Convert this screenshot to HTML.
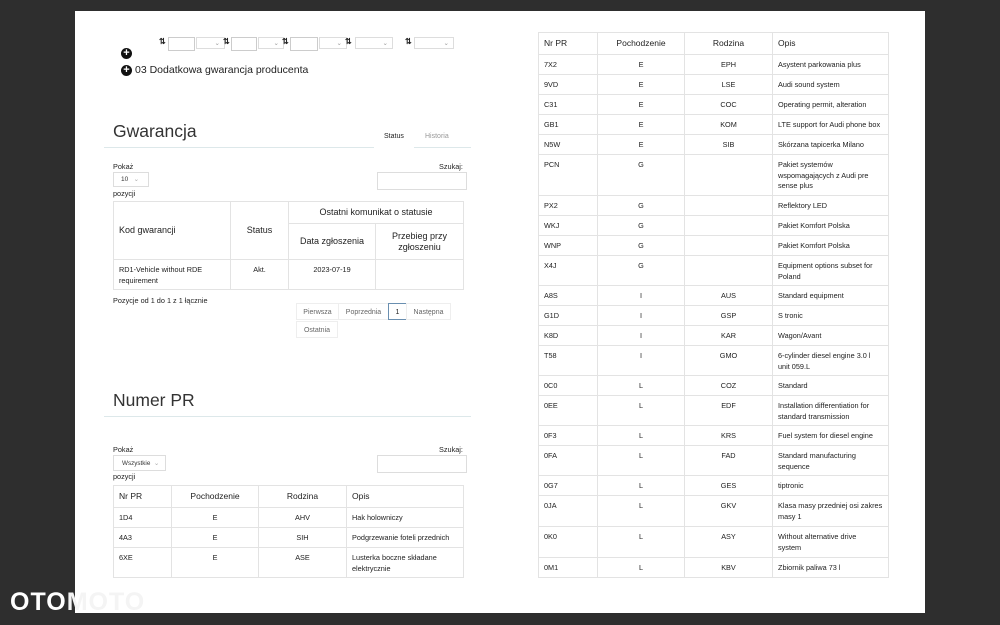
<!DOCTYPE html>
<html><head><meta charset="utf-8"><style>
body{margin:0;width:1000px;height:625px;background:#2e2e2e;position:relative;overflow:hidden;font-family:"Liberation Sans",sans-serif;color:#222}
#pg{position:absolute;left:75px;top:11px;width:850px;height:602px;background:#fff}
.a{position:absolute}
table{border-collapse:collapse;position:absolute;font-size:7.3px;table-layout:fixed}
td,th{border:1px solid #e3e3e3;padding:0 5px;vertical-align:top;font-weight:normal;line-height:10.5px}
.c{text-align:center}
.s{font-size:7.3px}
.box{position:absolute;border:1px solid #ccc;background:#fff;height:12px}
.sel{position:absolute;border:1px solid #ddd;height:12px;font-size:6.5px;color:#999;text-align:right;box-sizing:border-box;padding-right:4px;line-height:11px}
.plus{position:absolute;width:11px;height:11px;border-radius:50%;background:#111;color:#fff;font-size:11px;line-height:11px;text-align:center;font-weight:bold}
.ar{position:absolute;font-size:8px;font-weight:bold}
h2{position:absolute;margin:0;font-weight:normal;font-size:17.5px;color:#333}
.pb{position:absolute;border:1px solid #eee;font-size:7px;color:#666;height:17px;line-height:17px;text-align:center;box-sizing:border-box}
</style></head><body>
<div id="pg"></div>
<div class="ar" style="left:159px;top:37px">⇅</div><div class="box" style="left:168px;top:37px;width:25px"></div><div class="sel" style="left:196px;top:37px;width:29px">⌄</div>
<div class="ar" style="left:223px;top:37px">⇅</div><div class="box" style="left:231px;top:37px;width:24px"></div><div class="sel" style="left:258px;top:37px;width:26px">⌄</div>
<div class="ar" style="left:282px;top:37px">⇅</div><div class="box" style="left:290px;top:37px;width:26px"></div><div class="sel" style="left:319px;top:37px;width:28px">⌄</div>
<div class="ar" style="left:345px;top:37px">⇅</div><div class="sel" style="left:355px;top:37px;width:38px">⌄</div>
<div class="ar" style="left:405px;top:37px">⇅</div><div class="sel" style="left:414px;top:37px;width:40px">⌄</div>
<div class="plus" style="left:121px;top:48px">+</div>
<div class="plus" style="left:121px;top:65px">+</div>
<div class="a" style="left:135px;top:64px;font-size:10.5px">03 Dodatkowa gwarancja producenta</div>
<h2 style="left:113px;top:121px">Gwarancja</h2>
<div class="a" style="left:104px;top:147px;width:270px;border-top:1px solid #dde8ea"></div>
<div class="a" style="left:384px;top:133px;font-size:7px">Status</div>
<div class="a" style="left:425px;top:133px;font-size:7px;color:#999">Historia</div>
<div class="a" style="left:414px;top:147px;width:57px;border-top:1px solid #dde8ea"></div>
<div class="a s" style="left:113px;top:162px">Pokaż</div>
<div class="sel" style="left:113px;top:172px;width:36px;height:15px;color:#333;text-align:left;padding-left:7px;line-height:14px">10 &nbsp; <span style="color:#aaa">⌄</span></div>
<div class="a s" style="left:113px;top:189px">pozycji</div>
<div class="a s" style="left:439px;top:162px">Szukaj:</div>
<div class="box" style="left:377px;top:172px;width:88px;height:16px;border-color:#ddd"></div>
<table style="left:113px;top:201px;width:350px;font-size:9px">
<col style="width:117px"><col style="width:58px"><col style="width:87px"><col style="width:88px">
<tr style="height:22px"><th rowspan="2" style="text-align:left;vertical-align:middle">Kod gwarancji</th><th rowspan="2" class="c" style="vertical-align:middle">Status</th><th colspan="2" class="c" style="vertical-align:middle">Ostatni komunikat o statusie</th></tr>
<tr style="height:36px"><th class="c" style="vertical-align:middle">Data zgłoszenia</th><th class="c" style="vertical-align:middle">Przebieg przy zgłoszeniu</th></tr>
<tr style="height:30px;font-size:7.3px"><td style="padding-top:5px">RD1-Vehicle without RDE requirement</td><td class="c" style="padding-top:5px">Akt.</td><td class="c" style="padding-top:5px">2023-07-19</td><td></td></tr>
</table>
<div class="a s" style="left:113px;top:296px">Pozycje od 1 do 1 z 1 łącznie</div>
<div class="pb" style="left:296px;top:303px;width:43px">Pierwsza</div>
<div class="pb" style="left:338px;top:303px;width:51px">Poprzednia</div>
<div class="pb" style="left:388px;top:303px;width:19px;border-color:#6a8fb0;color:#222">1</div>
<div class="pb" style="left:406px;top:303px;width:45px">Następna</div>
<div class="pb" style="left:296px;top:321px;width:42px">Ostatnia</div>
<h2 style="left:113px;top:390px">Numer PR</h2>
<div class="a" style="left:104px;top:416px;width:367px;border-top:1px solid #dde8ea"></div>
<div class="a s" style="left:113px;top:445px">Pokaż</div>
<div class="sel" style="left:113px;top:455px;width:53px;height:16px;color:#333;text-align:left;padding-left:8px;line-height:15px;font-size:6.3px">Wszystkie &nbsp;<span style="color:#aaa">⌄</span></div>
<div class="a s" style="left:113px;top:472px">pozycji</div>
<div class="a s" style="left:439px;top:445px">Szukaj:</div>
<div class="box" style="left:377px;top:455px;width:88px;height:16px;border-color:#ddd"></div>
<table style="left:113px;top:485px;width:350px">
<col style="width:58px"><col style="width:87px"><col style="width:88px"><col style="width:117px">
<tr style="height:22px;font-size:8.5px"><th style="text-align:left;vertical-align:middle">Nr PR</th><th class="c" style="vertical-align:middle">Pochodzenie</th><th class="c" style="vertical-align:middle">Rodzina</th><th style="text-align:left;vertical-align:middle">Opis</th></tr>
<tr style="height:20px"><td style="padding-top:5px">1D4</td><td class="c" style="padding-top:5px">E</td><td class="c" style="padding-top:5px">AHV</td><td style="padding-top:5px">Hak holowniczy</td></tr>
<tr style="height:20px"><td style="padding-top:5px">4A3</td><td class="c" style="padding-top:5px">E</td><td class="c" style="padding-top:5px">SIH</td><td style="padding-top:5px">Podgrzewanie foteli przednich</td></tr>
<tr style="height:30px"><td style="padding-top:5px">6XE</td><td class="c" style="padding-top:5px">E</td><td class="c" style="padding-top:5px">ASE</td><td style="padding-top:5px">Lusterka boczne składane elektrycznie</td></tr>
</table>
<table id="r" style="left:538px;top:32px;width:350px">
<col style="width:59px"><col style="width:87px"><col style="width:88px"><col style="width:116px">
<tr style="height:22px;font-size:8.5px"><th style="text-align:left;vertical-align:middle">Nr PR</th><th class="c" style="vertical-align:middle">Pochodzenie</th><th class="c" style="vertical-align:middle">Rodzina</th><th style="text-align:left;vertical-align:middle">Opis</th></tr>
</table>
<script>
var d=[["7X2","E","EPH","Asystent parkowania plus",20],["9VD","E","LSE","Audi sound system",20],["C31","E","COC","Operating permit, alteration",20],["GB1","E","KOM","LTE support for Audi phone box",20],["N5W","E","SIB","Skórzana tapicerka Milano",20],["PCN","G","","Pakiet systemów wspomagających z Audi pre sense plus",41],["PX2","G","","Reflektory LED",20],["WKJ","G","","Pakiet Komfort Polska",20],["WNP","G","","Pakiet Komfort Polska",20],["X4J","G","","Equipment options subset for Poland",30],["A8S","I","AUS","Standard equipment",20],["G1D","I","GSP","S tronic",20],["K8D","I","KAR","Wagon/Avant",20],["T58","I","GMO","6-cylinder diesel engine 3.0 l unit 059.L",30],["0C0","L","COZ","Standard",20],["0EE","L","EDF","Installation differentiation for standard transmission",30],["0F3","L","KRS","Fuel system for diesel engine",20],["0FA","L","FAD","Standard manufacturing sequence",30],["0G7","L","GES","tiptronic",20],["0JA","L","GKV","Klasa masy przedniej osi zakres masy 1",31],["0K0","L","ASY","Without alternative drive<br>system",31],["0M1","L","KBV","Zbiornik paliwa 73 l",20]];
var t=document.getElementById("r"),h="";
d.forEach(function(r){h+='<tr style="height:'+r[4]+'px"><td style="padding-top:5px">'+r[0]+'</td><td class="c" style="padding-top:5px">'+r[1]+'</td><td class="c" style="padding-top:5px">'+r[2]+'</td><td style="padding-top:5px">'+r[3]+'</td></tr>';});
t.insertAdjacentHTML("beforeend",h);
</script>
<div class="a" style="left:10px;top:588px;font-size:25px;font-weight:bold;color:#fff;letter-spacing:1px">OTO<span style="color:#f4f4f4">MOTO</span></div>
</body></html>
